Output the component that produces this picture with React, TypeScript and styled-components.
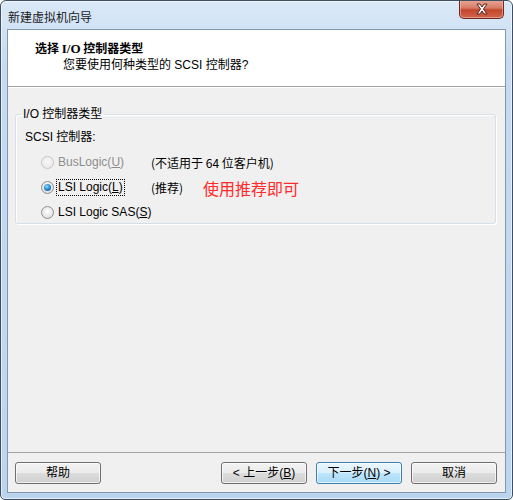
import React from "react";
import styled, { createGlobalStyle } from "styled-components";

const Global = createGlobalStyle`
  html, body { margin: 0; padding: 0; background: #ffffff; }
  body { font-family: "Liberation Sans", "Noto Sans CJK SC", sans-serif; font-size: 12px; color: #000; }
  * { box-sizing: border-box; }
`;

const Window = styled.div`
  width: 513px;
  height: 500px;
  border: 1px solid #3e4f63;
  border-radius: 6px 6px 5px 5px;
  background: linear-gradient(to bottom, #dbe9f8 0px, #c6dbf2 60px, #bcd5ef 100%);
  display: flex;
  flex-direction: column;
  overflow: hidden;
  box-shadow: inset 0 0 0 1px rgba(255, 255, 255, 0.6);
`;

const TitleBar = styled.div`
  height: 28px;
  display: flex;
  align-items: flex-start;
  justify-content: space-between;
  padding-left: 7px;
  padding-right: 8px;
`;

const TitleText = styled.div`
  margin-top: 9px;
  font-size: 12px;
  line-height: 14px;
  color: #1b1b1b;
  font-family: "Noto Sans CJK SC", sans-serif;
`;

const CloseButton = styled.div`
  width: 45px;
  height: 19px;
  margin-top: -1px;
  border: 1px solid #6a2c22;
  border-top: none;
  border-radius: 0 0 5px 5px;
  background: linear-gradient(to bottom, #e8a898 0%, #d67a64 45%, #c3452c 55%, #d0664c 100%);
  box-shadow: inset 0 0 0 1px rgba(255, 200, 190, 0.5);
  display: flex;
  align-items: center;
  justify-content: center;
`;

const Client = styled.div`
  flex: 1;
  margin: 0 6px 6px 6px;
  border: 1px solid #8396ad;
  background: #f0f0f0;
  display: flex;
  flex-direction: column;
`;

const Header = styled.div`
  height: 57px;
  background: #ffffff;
  border-bottom: 1px solid #a0a0a0;
  box-shadow: 0 1px 0 #ffffff;
  padding: 11px 0 0 27px;
  display: flex;
  flex-direction: column;
`;

const HeaderTitle = styled.div`
  font-family: "Noto Sans CJK SC", sans-serif;
  font-weight: 700;
  font-size: 12px;
  line-height: 14px;
  color: #000;
`;

const SerifBit = styled.span`
  font-family: "Liberation Serif", serif;
  font-weight: 700;
  font-size: 13px;
`;

const HeaderSub = styled.div`
  margin-top: 2px;
  padding-left: 28px;
  font-size: 12px;
  line-height: 14px;
  color: #000;
`;

const Body = styled.div`
  flex: 1;
  padding: 20px 9px 0 7px;
  display: flex;
  flex-direction: column;
`;

const GroupBox = styled.fieldset`
  margin: 0;
  height: 117px;
  border: 1px solid #d5dfe5;
  border-radius: 3px;
  box-shadow: inset 1px 1px 0 #ffffff, 1px 1px 0 #ffffff;
  padding: 6px 0 0 9px;
  min-width: 0;
`;

const Legend = styled.legend`
  padding: 0 2px;
  margin-left: -4px;
  font-size: 12px;
  line-height: 14px;
  color: #000;
`;

const SectionLabel = styled.div`
  font-size: 12px;
  line-height: 14px;
  margin: 3px 0 6px 0;
  white-space: nowrap;
`;

const OptionRow = styled.div`
  display: flex;
  align-items: center;
  height: 25px;
  padding-left: 16px;
  white-space: nowrap;
`;

const RadioCircle = styled.span<{ $checked?: boolean; $disabled?: boolean }>`
  width: 13px;
  height: 13px;
  border-radius: 50%;
  border: 1px solid ${(p) => (p.$disabled ? "#c6c6c6" : "#8e8f8f")};
  background: ${(p) =>
    p.$disabled
      ? "radial-gradient(circle at 50% 40%, #f7f7f7, #e6e6e6)"
      : "radial-gradient(circle at 50% 40%, #ffffff, #e2e2e2 70%, #cfcfcf)"};
  display: flex;
  align-items: center;
  justify-content: center;
  flex-shrink: 0;
  &::after {
    content: "";
    display: ${(p) => (p.$checked ? "block" : "none")};
    width: 7px;
    height: 7px;
    border-radius: 50%;
    background: radial-gradient(circle at 40% 35%, #9fe0ff 0%, #2a8fd0 45%, #0c4f8a 100%);
  }
`;

const OptionLabel = styled.span`
  margin-left: 3px;
  width: 94px;
  flex-shrink: 0;
  display: flex;
  white-space: nowrap;
  overflow: visible;
`;

const LabelText = styled.span<{ $disabled?: boolean; $focused?: boolean }>`
  color: ${(p) => (p.$disabled ? "#8d8d8d" : "#000")};
  font-size: 12px;
  line-height: 15px;
  padding: 0 1px;
  white-space: nowrap;
  outline: ${(p) => (p.$focused ? "1px dotted #000" : "none")};
  outline-offset: 0px;
`;

const Note = styled.span`
  font-family: "Noto Sans CJK SC", "Liberation Sans", sans-serif;
  font-size: 12px;
  line-height: 15px;
  color: #000;
  width: 52px;
  flex-shrink: 0;
`;

const NoteWide = styled(Note)`
  width: auto;
`;

const Hint = styled.span`
  font-family: "Noto Sans CJK SC", sans-serif;
  font-size: 16px;
  line-height: 18px;
  color: #ff2a2a;
`;

const Footer = styled.div`
  border-top: 1px solid #a0a0a0;
  height: 40px;
  padding: 9px 8px 0 7px;
  display: flex;
  align-items: flex-start;
`;

const Spacer = styled.div`
  flex: 1;
`;

const Button = styled.button<{ $focused?: boolean; $gap?: number }>`
  width: 86px;
  height: 22px;
  margin-left: ${(p) => p.$gap ?? 0}px;
  border-radius: 3px;
  border: 1px solid ${(p) => (p.$focused ? "#3c7fb1" : "#707070")};
  background: ${(p) =>
    p.$focused
      ? "linear-gradient(to bottom, #eaf6fd 0%, #d9f0fc 50%, #bee6fd 51%, #a7d9f5 100%)"
      : "linear-gradient(to bottom, #f2f2f2 0%, #ebebeb 50%, #dddddd 51%, #cfcfcf 100%)"};
  box-shadow: inset 0 0 0 1px rgba(255, 255, 255, 0.7);
  font-family: "Liberation Sans", "Noto Sans CJK SC", sans-serif;
  font-size: 12px;
  line-height: 14px;
  color: #000;
  padding: 0;
  display: flex;
  align-items: center;
  justify-content: center;
`;

function CloseGlyph() {
  return (
    <svg width="14" height="12" viewBox="0 0 14 12">
      <path
        d="M2 1 L5 1 L7 4 L9 1 L12 1 L8.5 6 L12 11 L9 11 L7 8 L5 11 L2 11 L5.5 6 Z"
        fill="#ffffff"
        stroke="#5a2118"
        strokeWidth="1"
        strokeLinejoin="round"
      />
    </svg>
  );
}

export default function App() {
  return (
    <>
      <Global />
      <Window>
        <TitleBar>
          <TitleText>新建虚拟机向导</TitleText>
          <CloseButton>
            <CloseGlyph />
          </CloseButton>
        </TitleBar>
        <Client>
          <Header>
            <HeaderTitle>
              选择 <SerifBit>I/O</SerifBit> 控制器类型
            </HeaderTitle>
            <HeaderSub>您要使用何种类型的 SCSI 控制器?</HeaderSub>
          </Header>
          <Body>
            <GroupBox>
              <Legend>I/O 控制器类型</Legend>
              <SectionLabel>SCSI 控制器:</SectionLabel>
              <OptionRow>
                <RadioCircle $disabled />
                <OptionLabel>
                  <LabelText $disabled>
                    BusLogic(<u>U</u>)
                  </LabelText>
                </OptionLabel>
                <NoteWide>(不适用于 64 位客户机)</NoteWide>
              </OptionRow>
              <OptionRow>
                <RadioCircle $checked />
                <OptionLabel>
                  <LabelText $focused>
                    LSI Logic(<u>L</u>)
                  </LabelText>
                </OptionLabel>
                <Note>(推荐)</Note>
                <Hint>使用推荐即可</Hint>
              </OptionRow>
              <OptionRow>
                <RadioCircle />
                <OptionLabel>
                  <LabelText>
                    LSI Logic SAS(<u>S</u>)
                  </LabelText>
                </OptionLabel>
              </OptionRow>
            </GroupBox>
            <Spacer />
          </Body>
          <Footer>
            <Button>帮助</Button>
            <Spacer />
            <Button>
              &lt; 上一步(<u>B</u>)
            </Button>
            <Button $focused $gap={9}>
              下一步(<u>N</u>) &gt;
            </Button>
            <Button $gap={9}>取消</Button>
          </Footer>
        </Client>
      </Window>
    </>
  );
}
